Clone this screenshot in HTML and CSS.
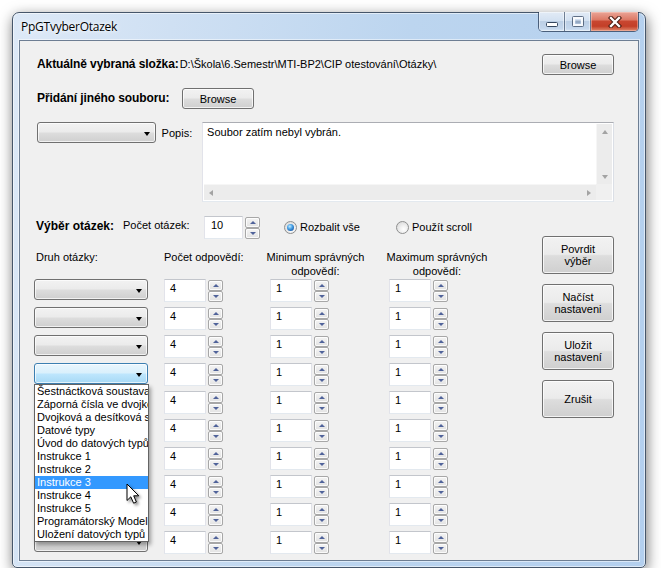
FILE: index.html
```html
<!DOCTYPE html>
<html lang="cs">
<head>
<meta charset="utf-8">
<title>PpGTvyberOtazek</title>
<link rel="stylesheet" href="styles.css">
</head>
<body>
<div class="window">
  <div class="titlebar">
    <span class="title">PpGTvyberOtazek</span>
    <div class="caption">
      <div class="cbtn cmin"><svg width="12" height="5" viewBox="0 0 12 5"><rect x="0.5" y="0.5" width="11" height="4" rx="1" fill="#fff" stroke="#34465e"/></svg></div>
      <div class="cbtn cmax"><svg width="12" height="11" viewBox="0 0 12 11"><rect x="0.5" y="0.5" width="11" height="10" rx="1" fill="none" stroke="#4a5b72"/><rect x="2" y="2" width="8" height="7" fill="none" stroke="#fff" stroke-width="2"/><rect x="3.5" y="4.5" width="5" height="3" fill="#8fa3bd"/></svg></div>
      <div class="cbtn cclose"><svg width="14" height="12" viewBox="0 0 14 12"><path d="M3 2 L11 10 M11 2 L3 10" stroke="#4b1c12" stroke-width="4.4" stroke-linecap="square"/><path d="M3 2 L11 10 M11 2 L3 10" stroke="#fff" stroke-width="2.3" stroke-linecap="square"/></svg></div>
    </div>
  </div>
  <div class="client">
    <div class="row r1">
      <span class="blabel">Aktuálně vybraná složka:</span>
      <span class="path">D:\Škola\6.Semestr\MTI-BP2\CIP otestování\Otázky\</span>
      <div class="btn browse push">Browse</div>
    </div>
    <div class="row r2">
      <span class="blabel l2">Přidání jiného souboru:</span>
      <div class="btn browse">Browse</div>
    </div>
    <div class="row r3">
      <div class="combo ctop"><span class="arrow"></span></div>
      <span class="popis">Popis:</span>
      <div class="memo">
        <div class="memo-text">Soubor zatím nebyl vybrán.</div>
        <div class="vscroll"><span class="sa sa-up"></span><span class="sa sa-down"></span></div>
        <div class="hscroll"><span class="sa sa-left"></span><span class="sa sa-right"></span></div>
        <div class="corner"></div>
      </div>
    </div>
    <div class="lower">
      <div class="left">
        <div class="row r4">
          <span class="vyber">Výběr otázek:</span>
          <span class="pocet">Počet otázek:</span>
          <div class="nud nq"><div class="tb tb10">10</div><div class="spin"><span class="sb up"></span><span class="sb dn"></span></div></div>
          <div class="radio-wrap rw1"><span class="radio on"></span><span>Rozbalit vše</span></div>
          <div class="radio-wrap"><span class="radio"></span><span>Použít scroll</span></div>
        </div>
        <div class="heads">
          <div class="h h1">Druh otázky:</div>
          <div class="h h2">Počet odpovědí:</div>
          <div class="h h3">Minimum správných<br>odpovědí:</div>
          <div class="h h4">Maximum správných<br>odpovědí:</div>
        </div>
        <div class="rows">
          <div class="qrow"><div class="cwrap"><div class="combo"><span class="arrow"></span></div></div><div class="nud n1"><div class="tb">4</div><div class="spin"><span class="sb up"></span><span class="sb dn"></span></div></div><div class="nud n2"><div class="tb">1</div><div class="spin"><span class="sb up"></span><span class="sb dn"></span></div></div><div class="nud n3"><div class="tb">1</div><div class="spin"><span class="sb up"></span><span class="sb dn"></span></div></div></div>
          <div class="qrow"><div class="cwrap"><div class="combo"><span class="arrow"></span></div></div><div class="nud n1"><div class="tb">4</div><div class="spin"><span class="sb up"></span><span class="sb dn"></span></div></div><div class="nud n2"><div class="tb">1</div><div class="spin"><span class="sb up"></span><span class="sb dn"></span></div></div><div class="nud n3"><div class="tb">1</div><div class="spin"><span class="sb up"></span><span class="sb dn"></span></div></div></div>
          <div class="qrow"><div class="cwrap"><div class="combo"><span class="arrow"></span></div></div><div class="nud n1"><div class="tb">4</div><div class="spin"><span class="sb up"></span><span class="sb dn"></span></div></div><div class="nud n2"><div class="tb">1</div><div class="spin"><span class="sb up"></span><span class="sb dn"></span></div></div><div class="nud n3"><div class="tb">1</div><div class="spin"><span class="sb up"></span><span class="sb dn"></span></div></div></div>
          <div class="qrow"><div class="cwrap open"><div class="combo sel"><span class="arrow"></span></div>
              <div class="dropdown">
                <div class="item">Šestnáctková soustava</div>
                <div class="item">Záporná čísla ve dvojkové soustavě</div>
                <div class="item">Dvojková a desítková soustava</div>
                <div class="item">Datové typy</div>
                <div class="item">Úvod do datových typů</div>
                <div class="item">Instrukce 1</div>
                <div class="item">Instrukce 2</div>
                <div class="item hl">Instrukce 3</div>
                <div class="item">Instrukce 4</div>
                <div class="item">Instrukce 5</div>
                <div class="item">Programátorský Model CPU</div>
                <div class="item">Uložení datových typů</div>
              </div>
              <svg class="cursor" width="16" height="23" viewBox="0 0 16 23"><path d="M1 1 L1 17.5 L4.8 13.8 L7.6 20.2 L10.4 19 L7.7 12.8 L12.8 12.8 Z" fill="#fff" stroke="#000" stroke-width="1" stroke-linejoin="miter"/></svg>
            </div><div class="nud n1"><div class="tb">4</div><div class="spin"><span class="sb up"></span><span class="sb dn"></span></div></div><div class="nud n2"><div class="tb">1</div><div class="spin"><span class="sb up"></span><span class="sb dn"></span></div></div><div class="nud n3"><div class="tb">1</div><div class="spin"><span class="sb up"></span><span class="sb dn"></span></div></div></div>
          <div class="qrow"><div class="cwrap"><div class="combo"><span class="arrow"></span></div></div><div class="nud n1"><div class="tb">4</div><div class="spin"><span class="sb up"></span><span class="sb dn"></span></div></div><div class="nud n2"><div class="tb">1</div><div class="spin"><span class="sb up"></span><span class="sb dn"></span></div></div><div class="nud n3"><div class="tb">1</div><div class="spin"><span class="sb up"></span><span class="sb dn"></span></div></div></div>
          <div class="qrow"><div class="cwrap"><div class="combo"><span class="arrow"></span></div></div><div class="nud n1"><div class="tb">4</div><div class="spin"><span class="sb up"></span><span class="sb dn"></span></div></div><div class="nud n2"><div class="tb">1</div><div class="spin"><span class="sb up"></span><span class="sb dn"></span></div></div><div class="nud n3"><div class="tb">1</div><div class="spin"><span class="sb up"></span><span class="sb dn"></span></div></div></div>
          <div class="qrow"><div class="cwrap"><div class="combo"><span class="arrow"></span></div></div><div class="nud n1"><div class="tb">4</div><div class="spin"><span class="sb up"></span><span class="sb dn"></span></div></div><div class="nud n2"><div class="tb">1</div><div class="spin"><span class="sb up"></span><span class="sb dn"></span></div></div><div class="nud n3"><div class="tb">1</div><div class="spin"><span class="sb up"></span><span class="sb dn"></span></div></div></div>
          <div class="qrow"><div class="cwrap"><div class="combo"><span class="arrow"></span></div></div><div class="nud n1"><div class="tb">4</div><div class="spin"><span class="sb up"></span><span class="sb dn"></span></div></div><div class="nud n2"><div class="tb">1</div><div class="spin"><span class="sb up"></span><span class="sb dn"></span></div></div><div class="nud n3"><div class="tb">1</div><div class="spin"><span class="sb up"></span><span class="sb dn"></span></div></div></div>
          <div class="qrow"><div class="cwrap"><div class="combo"><span class="arrow"></span></div></div><div class="nud n1"><div class="tb">4</div><div class="spin"><span class="sb up"></span><span class="sb dn"></span></div></div><div class="nud n2"><div class="tb">1</div><div class="spin"><span class="sb up"></span><span class="sb dn"></span></div></div><div class="nud n3"><div class="tb">1</div><div class="spin"><span class="sb up"></span><span class="sb dn"></span></div></div></div>
          <div class="qrow"><div class="cwrap"><div class="combo"><span class="arrow"></span></div></div><div class="nud n1"><div class="tb">4</div><div class="spin"><span class="sb up"></span><span class="sb dn"></span></div></div><div class="nud n2"><div class="tb">1</div><div class="spin"><span class="sb up"></span><span class="sb dn"></span></div></div><div class="nud n3"><div class="tb">1</div><div class="spin"><span class="sb up"></span><span class="sb dn"></span></div></div></div>
        </div>
      </div>
      <div class="buttons">
        <div class="btn big">Povrdit<br>výběr</div>
        <div class="btn big">Načíst<br>nastaveni</div>
        <div class="btn big">Uložit<br>nastavení</div>
        <div class="btn big">Zrušit</div>
      </div>
    </div>
  </div>
</div>
</body>
</html>
```
FILE: styles.css
```css
* { box-sizing: border-box; }
html, body { margin: 0; padding: 0; background: #fff; }
body {
  font-family: "Liberation Sans", Arial, sans-serif;
  font-size: 11px;
  line-height: 13px;
  color: #000;
}

/* ---------- window frame ---------- */
.window {
  margin: 12px 0 0 12px;
  width: 634px;
  height: 556px;
  border: 1px solid #46566a;
  border-radius: 7px 7px 5px 5px;
  padding: 0 6px 6px;
  display: flex;
  flex-direction: column;
  background: linear-gradient(100deg, #dde9f7 0%, #cfe0f3 22%, #bcd5ef 55%, #b3cfee 100%);
  box-shadow: inset 0 0 0 1px rgba(255,255,255,.55), 1px 4px 14px rgba(0,0,0,.55);
}
.titlebar {
  height: 27px;
  display: flex;
  align-items: center;
}
.title {
  padding-left: 2px;
  font-family: "Open Sans", "Noto Sans", sans-serif;
  font-size: 12px;
  letter-spacing: -0.25px;
  color: #000;
  text-shadow: 0 0 6px #fff, 0 0 3px #fff;
}
.caption {
  margin-left: auto;
  align-self: flex-start;
  margin-top: -1px;
  display: flex;
  height: 20px;
  border: 1px solid rgba(38,56,84,.75);
  border-top: none;
  border-radius: 0 0 5px 5px;
  overflow: hidden;
}
.cbtn {
  display: flex;
  align-items: center;
  justify-content: center;
  height: 100%;
}
.cmin, .cmax {
  width: 26px;
  border-right: 1px solid rgba(38,56,84,.6);
  background: linear-gradient(#e2ebf6 0%, #d3e1f1 45%, #bccfe5 50%, #c3d6ec 85%, #d6e5f4 100%);
  box-shadow: inset 0 0 0 1px rgba(255,255,255,.45);
}
.cmin { align-items: flex-end; padding-bottom: 4px; }
.cmax svg { opacity: .85; }
.cclose {
  width: 47px;
  background: linear-gradient(#eaa597 0%, #dd7a66 40%, #c84630 50%, #c33f28 75%, #e08a6e 100%);
  box-shadow: inset 0 0 0 1px rgba(255,220,210,.4);
}

/* ---------- client area ---------- */
.client {
  flex: 1;
  border: 1px solid #6d7e93;
  background: #f0f0f0;
  padding: 13px 24px 0 0;
  box-shadow: 0 0 0 1px rgba(255,255,255,.5);
}
.row { display: flex; align-items: center; }
.blabel { font-weight: bold; font-size: 12px; letter-spacing: -0.1px; }
.r1 { height: 21px; padding-left: 17px; }
.path { margin-left: 1px; }
.push { margin-left: auto; }
.r2 { height: 21px; margin-top: 13px; padding-left: 17px; }
.l2 { width: 145px; flex: none; }

.btn {
  border: 1px solid #707070;
  border-radius: 3px;
  background: linear-gradient(#f2f2f2 0%, #ebebeb 48%, #dddddd 52%, #cfcfcf 100%);
  box-shadow: inset 0 0 0 1px rgba(255,255,255,.75);
  display: flex;
  align-items: center;
  justify-content: center;
  text-align: center;
  line-height: 12px;
}
.browse { width: 72px; height: 21px; }

.r3 { margin-top: 13px; padding-left: 17px; align-items: flex-start; }
.combo {
  height: 21px;
  border: 1px solid #707070;
  border-radius: 3px;
  background: linear-gradient(#f2f2f2 0%, #ebebeb 48%, #dddddd 52%, #cfcfcf 100%);
  box-shadow: inset 0 0 0 1px rgba(255,255,255,.7);
  display: flex;
  justify-content: flex-end;
  align-items: center;
  padding-right: 5px;
}
.combo.sel {
  border-color: #3c7fb1;
  background: linear-gradient(#eaf6fd 0%, #d9f0fc 48%, #bee6fd 52%, #a7d9f5 100%);
}
.arrow {
  width: 0; height: 0;
  margin-top: 2px;
  border-left: 3.5px solid transparent;
  border-right: 3.5px solid transparent;
  border-top: 4px solid #000;
}
.ctop { width: 120px; }
.popis { margin: 5px 0 0 6px; width: 41px; }
.memo {
  width: 417px;
  height: 80px;
  border: 1px solid;
  border-color: #abadb3 #dbdfe6 #e3e9ef #e2e3ea;
  background: #fff;
  padding: 1px;
  display: grid;
  grid-template-columns: 1fr 16px;
  grid-template-rows: 1fr 16px;
}
.memo-text { padding: 2px 0 0 3px; }
.vscroll, .hscroll {
  background: #ececec;
  display: flex;
  justify-content: space-between;
  align-items: center;
}
.vscroll { flex-direction: column; padding: 6px 0 5px; border-left: 1px solid #f6f6f6; }
.hscroll { padding: 0 5px 0 5px; border-top: 1px solid #f6f6f6; }
.corner { background: #f0f0f0; }
.sa { width: 0; height: 0; }
.sa-up { border-left: 3.5px solid transparent; border-right: 3.5px solid transparent; border-bottom: 4px solid #a3a3a3; }
.sa-down { border-left: 3.5px solid transparent; border-right: 3.5px solid transparent; border-top: 4px solid #a3a3a3; }
.sa-left { border-top: 3.5px solid transparent; border-bottom: 3.5px solid transparent; border-right: 4px solid #a3a3a3; }
.sa-right { border-top: 3.5px solid transparent; border-bottom: 3.5px solid transparent; border-left: 4px solid #a3a3a3; }

/* ---------- lower section ---------- */
.lower { display: flex; margin-top: 14px; }
.left { flex: 1; }
.r4 { height: 23px; }
.vyber { font-weight: bold; font-size: 12px; padding-left: 16px; width: 103px; flex: none; margin-top: -2px; }
.pocet { width: 81px; flex: none; margin-top: -4px; }

.nud { display: flex; gap: 2px; height: 23px; flex: none; }
.tb {
  width: 42px;
  height: 23px;
  background: #fff;
  border: 1px solid;
  border-color: #c3c6cc #e2e3ea #e3e9ef #e2e3ea;
  padding: 2px 0 0 5px;
}
.tb10 { width: 39px; padding-left: 6px; }
.spin { width: 15px; display: flex; flex-direction: column; padding-top: 1px; }
.sb {
  height: 11px;
  border: 1px solid #a7a7a7;
  border-radius: 2px;
  background: linear-gradient(#f4f4f4, #e2e2e2);
  box-shadow: inset 0 0 0 1px rgba(255,255,255,.8);
  display: flex;
  align-items: center;
  justify-content: center;
}
.sb::after { content: ""; width: 0; height: 0; border-left: 3px solid transparent; border-right: 3px solid transparent; }
.sb.up::after { border-bottom: 3px solid #50639a; }
.sb.dn::after { border-top: 3px solid #50639a; }

.radio-wrap { display: flex; align-items: center; gap: 3px; flex: none; }
.rw1 { margin-left: 24px; width: 112px; }
.radio {
  width: 13px;
  height: 13px;
  border-radius: 50%;
  border: 1px solid #8e8f8f;
  background: radial-gradient(circle at 60% 65%, #ffffff 0%, #f1f1f1 35%, #d2d2d2 100%);
  display: flex;
  align-items: center;
  justify-content: center;
}
.radio.on::after {
  content: "";
  width: 7px;
  height: 7px;
  border-radius: 50%;
  background: radial-gradient(circle at 40% 35%, #c5ecff 0%, #49a2e6 40%, #1b5aa8 80%, #163f7c 100%);
}

.heads { display: flex; margin-top: 11px; height: 28px; line-height: 14px; }
.h { flex: none; }
.h1 { padding-left: 16px; width: 144px; }
.h2 { width: 100px; }
.h3 { width: 103px; text-align: center; }
.h4 { width: 140px; text-align: center; }

.rows { display: flex; flex-direction: column; gap: 5px; margin-top: 1px; }
.qrow { display: flex; align-items: flex-start; }
.cwrap { margin-left: 14px; width: 114px; flex: none; position: relative; }
.n1 { margin-left: 16px; }
.n2 { margin-left: 47px; }
.n3 { margin-left: 60px; }

.dropdown {
  position: absolute;
  left: 0;
  top: 21px;
  width: 115px;
  height: 158px;
  background: #fff;
  border: 1px solid #646464;
  box-shadow: 2px 3px 4px rgba(0,0,0,.35);
  overflow: hidden;
  z-index: 5;
}
.item { height: 13px; line-height: 13px; padding-left: 2px; white-space: nowrap; overflow: hidden; }
.item.hl { background: #3399ff; color: #fff; }
.cursor {
  position: absolute;
  left: 92px;
  top: 120px;
  z-index: 6;
  filter: drop-shadow(2px 2px 1.5px rgba(0,0,0,.45));
}

.buttons { width: 72px; flex: none; display: flex; flex-direction: column; gap: 10px; padding-top: 20px; }
.big { height: 38px; }
```
